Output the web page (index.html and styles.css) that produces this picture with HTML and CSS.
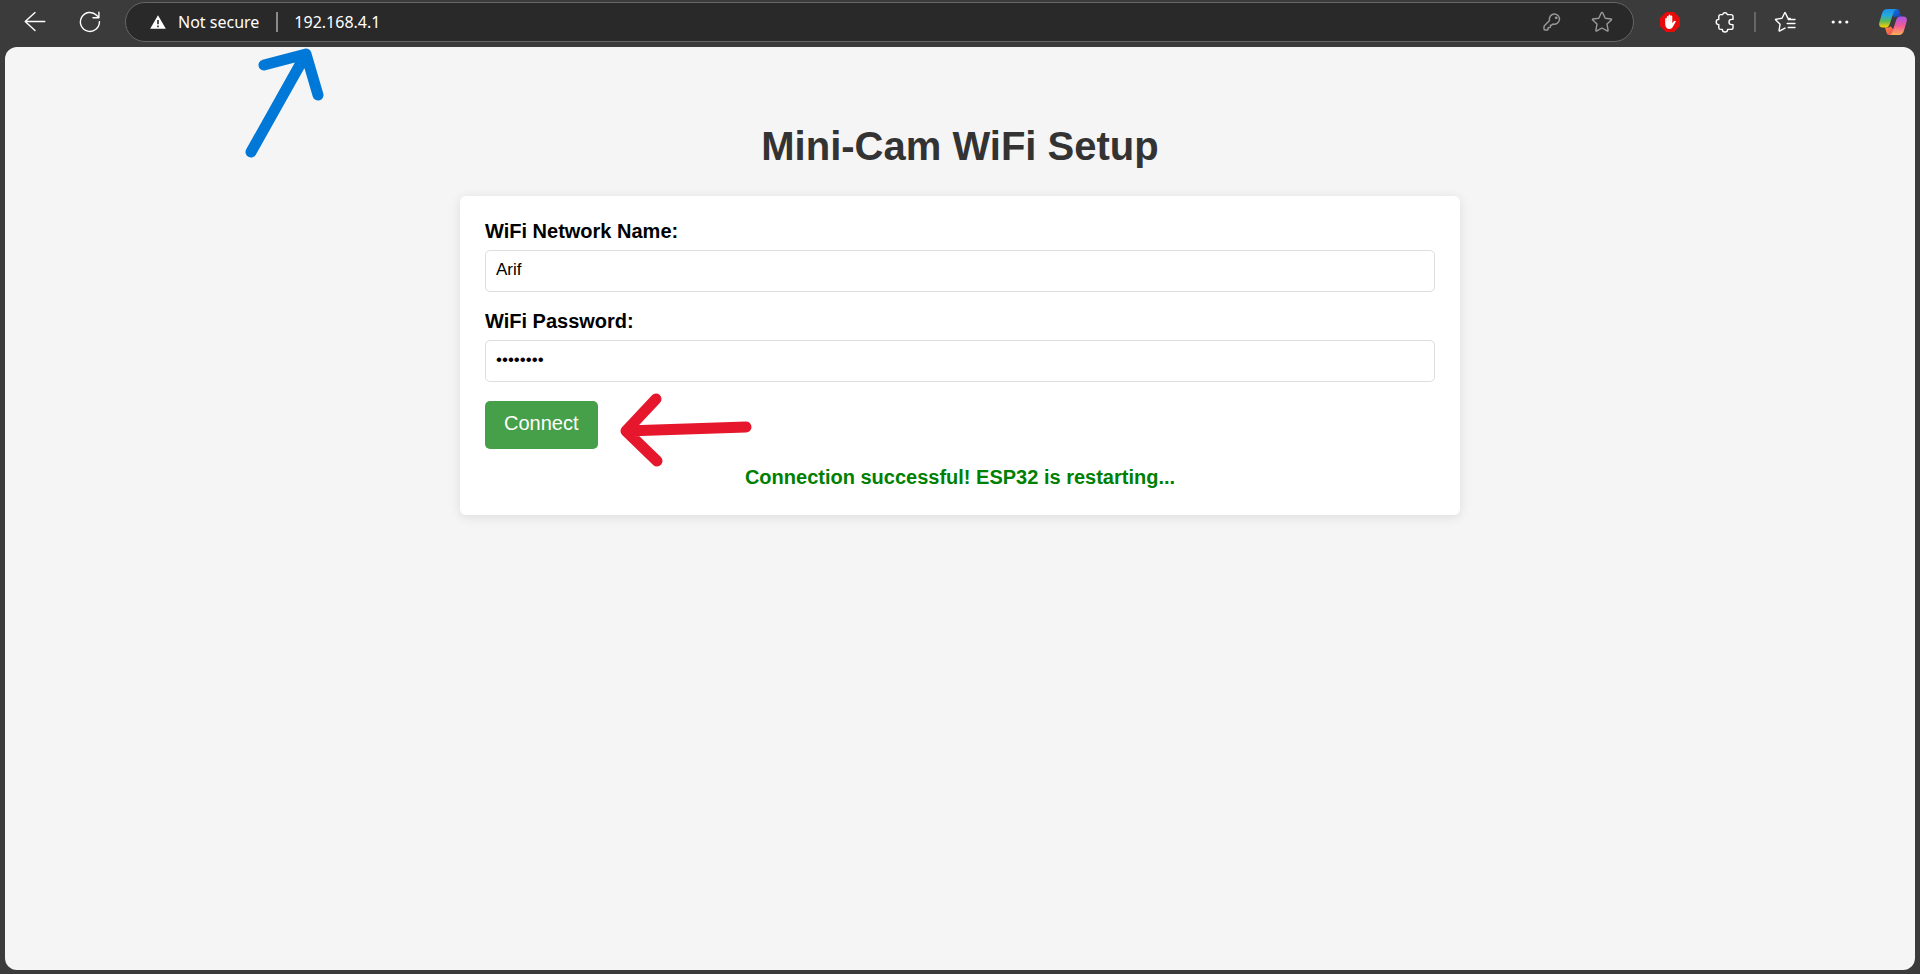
FILE: index.html
```html
<!DOCTYPE html>
<html lang="en">
<head>
<meta charset="utf-8">
<title>Mini-Cam WiFi Setup</title>
<link rel="stylesheet" href="styles.css">
</head>
<body>
<header class="toolbar">
  <nav class="group group-nav" aria-label="Navigation">
    <button class="tool" type="button" aria-label="Back">
      <svg width="22" height="22" viewBox="0 0 22 22" class="line"><path d="M20.8 10.5H1.2M11 1.6L1.2 10.5L11 19.6"/></svg>
    </button>
    <button class="tool" type="button" aria-label="Refresh">
      <svg width="22" height="22" viewBox="0 0 22 22" class="line"><path d="M20.4 10.6A9.5 9.5 0 1 1 17.6 4.2L19.6 6.4M19.9 1.3V6.8H14"/></svg>
    </button>
  </nav>

  <div class="address">
    <button class="security" type="button">
      <svg width="16" height="14" viewBox="0 0 16 14"><path d="M8 0.3L15.8 13.8H0.2Z" fill="#fff"/><path d="M8 5v4.2M8 10.6v1.7" stroke="#292929" stroke-width="1.6"/></svg>
      <span>Not secure</span>
    </button>
    <span class="rule"></span>
    <input class="url" type="text" value="192.168.4.1" aria-label="Address">
    <div class="address-actions">
      <button class="mini" type="button" aria-label="Saved passwords">
        <svg width="18" height="18" viewBox="0 0 18 18" class="line dim"><path d="M11.7 1A5.2 5.2 0 0 0 6.5 7.6L1.4 12.7Q1 13.1 1 13.7V16Q1 17 2 17H4.2Q5 17 5 16.2V14.6H6.6Q7.4 14.6 7.4 13.8V12.2H8.6L10 11A5.1 5.1 0 1 0 11.7 1Z"/><circle cx="13.2" cy="4.8" r="0.7"/></svg>
      </button>
      <button class="mini" type="button" aria-label="Add to favorites">
        <svg width="22" height="22" viewBox="0 0 22 22" class="line dim"><path d="M11 1.4Q11.5 1.4 11.8 2L14.2 7.2L20 8Q21 8.2 20.3 9L16 13.1L17.1 19.2Q17.2 20.4 16.2 19.9L11 17L5.8 19.9Q4.8 20.4 4.9 19.2L6 13.1L1.7 9Q1 8.2 2 8L7.8 7.2L10.2 2Q10.5 1.4 11 1.4Z"/></svg>
      </button>
    </div>
  </div>

  <div class="group group-extensions">
    <button class="tool" type="button" aria-label="Ad blocker">
      <svg width="20" height="20" viewBox="0 0 20 20"><path d="M5.9 0H14.1L20 5.9V14.1L14.1 20H5.9L0 14.1V5.9Z" fill="#e60a0a"/><path d="M5.2 7Q5.2 5.9 6 5.9T6.8 7V5Q6.8 3.9 7.7 3.9T8.6 5V3.5Q8.6 2.5 9.5 2.5T10.4 3.5V4.6Q10.5 3.6 11.4 3.6T12.3 4.6V11.2L13.8 9.3Q14.7 8.4 15.6 8.9Q16 9.2 15.7 9.7L12.8 15Q11.8 17 9.3 17Q6.7 17 5.8 14.8Q5.2 13.4 5.2 11Z" fill="#fff"/><path d="M6.8 7V10M8.6 5V9.5M10.4 4.6V9.5" stroke="#f3aaaa" stroke-width=".35"/></svg>
    </button>
    <button class="tool" type="button" aria-label="Extensions">
      <svg width="20" height="22" viewBox="0 0 20 22" class="line"><path d="M7.6 3.6A2.5 2.5 0 0 1 12.4 3.6H16Q18 3.6 18 5.6V8.4H16.6A2.6 2.6 0 0 0 16.6 13.6H18V16.4Q18 18.4 16 18.4H12.6A2.5 2.5 0 0 1 7.4 18.4H5.4Q3.8 18.4 3.8 16.8V13.6A2.6 2.6 0 0 1 3.8 8.4V5.4Q3.8 3.6 5.6 3.6Z"/></svg>
    </button>
  </div>
  <span class="rule rule-dark"></span>
  <div class="group group-menu">
    <button class="tool" type="button" aria-label="Favorites">
      <svg width="22" height="22" viewBox="0 0 22 22" class="line"><path d="M16.2 7.5L13.8 7.1L11.4 2Q11 1 10.6 2L8 7.3L2 8.2Q1.1 8.4 1.8 9.1L6.1 13.2L5.1 19.2Q5 20.3 5.9 19.9L11 17.1M14.2 8.5H21M13.2 12.5H21M14.2 16.5H21"/></svg>
    </button>
    <button class="tool" type="button" aria-label="Settings and more">
      <svg width="20" height="6" viewBox="0 0 20 6" fill="#fff"><circle cx="3.2" cy="3" r="1.6"/><circle cx="10" cy="3" r="1.6"/><circle cx="16.8" cy="3" r="1.6"/></svg>
    </button>
  </div>
  <button class="tool copilot" type="button" aria-label="Copilot">
    <svg width="28" height="26" viewBox="0 0 28 26">
      <defs>
        <linearGradient id="cool" x1="0" y1="0" x2="0" y2="1"><stop offset="0" stop-color="#1d8fe8"/><stop offset=".35" stop-color="#25a9df"/><stop offset=".65" stop-color="#5cb85a"/><stop offset="1" stop-color="#ffd000"/></linearGradient>
        <linearGradient id="warm" x1="0" y1="0" x2="0" y2="1"><stop offset="0" stop-color="#a855ea"/><stop offset=".5" stop-color="#ef5a98"/><stop offset="1" stop-color="#ffad55"/></linearGradient>
        <linearGradient id="fold" x1="0" y1="0" x2="1" y2="1"><stop offset="0" stop-color="#1672dc"/><stop offset="1" stop-color="#173db8"/></linearGradient>
        <linearGradient id="ember" x1="0" y1="0" x2="1" y2="1"><stop offset="0" stop-color="#ff913e"/><stop offset="1" stop-color="#ee4a55"/></linearGradient>
      </defs>
      <path d="M14 0H17.6Q19.7 0 20.4 2.2L21.6 6.2Q22 7.6 23.5 7.6H18.4Q16.5 7.6 15.5 8.6L13.6 6Z" fill="url(#fold)"/>
      <path d="M4.5 18.4H8.4Q10.5 18.4 11.6 17.2L14 20L13.8 26H10.2Q8.2 26 7.5 23.8L6.4 19.8Q6 18.4 4.5 18.4Z" fill="url(#ember)"/>
      <path d="M8.2 0H17.6Q15.6.4 14.8 2.8L10.6 15.6Q9.6 18.5 7.2 18.5H3.8Q-.8 18.5.4 13.3L3.1 4.3Q4.4 0 8.2 0Z" fill="url(#cool)"/>
      <path d="M19.8 26H10.4Q12.4 25.600 13.2 23.2L17.4 10.4Q18.4 7.5 20.8 7.5H24.2Q28.8 7.5 27.6 12.7L24.9 21.7Q23.6 26 19.8 26Z" fill="url(#warm)"/>
    </svg>
  </button>
</header>

<main class="page">
  <svg class="mark mark-address" width="80" height="112" viewBox="0 0 80 112" aria-hidden="true"><path d="M7 105L62 7M20 18L62 7L74 48"/></svg>
  <h1 class="title">Mini-Cam WiFi Setup</h1>
  <form class="card">
    <div class="field">
      <label for="ssid">WiFi Network Name:</label>
      <input id="ssid" type="text" value="Arif">
    </div>
    <div class="field">
      <label for="password">WiFi Password:</label>
      <input id="password" type="password" value="password">
    </div>
    <div class="submit">
      <button class="connect" type="button">Connect</button>
      <svg class="mark mark-connect" width="134" height="76" viewBox="0 0 134 76" aria-hidden="true"><path d="M127 34L7 38M37 6L7 38L38 68"/></svg>
    </div>
    <p class="status" role="status">Connection successful! ESP32 is restarting...</p>
  </form>
</main>
</body>
</html>
```

FILE: styles.css
```css
* {
  box-sizing: border-box;
}

body {
  display: flex;
  flex-direction: column;
  min-height: 100vh;
  margin: 0;
  background: #3b3b3b;
  font-family: "Liberation Sans", Arial, sans-serif;
}

button {
  padding: 0;
  border: 0;
  background: none;
  font: inherit;
}

/* Browser toolbar */
.toolbar {
  display: flex;
  align-items: center;
  padding: 2px 7px 5px 15px;
}

.group {
  display: flex;
  align-items: center;
  gap: 15px;
}

.group-nav {
  margin-right: 15px;
}

.group-extensions {
  margin: 0 9px 0 16px;
}

.group-menu {
  margin: 0 13px 0 9px;
}

.tool {
  display: grid;
  place-items: center;
  width: 40px;
  height: 40px;
}

.line {
  fill: none;
  stroke: #fff;
  stroke-width: 1.4;
  stroke-linecap: round;
  stroke-linejoin: round;
}

.dim {
  stroke: #999;
}

.address {
  display: flex;
  flex: 1;
  align-items: center;
  height: 40px;
  padding: 0 20px 0 24px;
  border: 1px solid #666;
  border-radius: 20px;
  background: #292929;
  color: #fff;
  font-family: "Noto Sans", "Open Sans", sans-serif;
  font-size: 16px;
}

.security {
  display: flex;
  align-items: center;
  gap: 12px;
  margin-right: 17px;
  color: #fff;
}

.rule {
  width: 2px;
  height: 20px;
  background: #8a8a8a;
}

.rule-dark {
  background: #666;
}

.url {
  flex: 1;
  min-width: 0;
  padding: 0;
  margin-left: 16px;
  border: 0;
  outline: 0;
  background: none;
  color: #fff;
  font: inherit;
}

.address-actions {
  display: flex;
  align-items: center;
  gap: 30px;
}

.mini {
  display: grid;
  place-items: center;
}

/* Setup page */
.page {
  position: relative;
  flex: 1;
  margin: 0 5px 4px;
  padding: 76px 20px 20px;
  border-radius: 12px;
  background: #f5f5f5;
}

.title {
  margin: 0 0 27px;
  color: #333;
  font-size: 40px;
  line-height: 46px;
  text-align: center;
}

.card {
  max-width: 1000px;
  margin: 0 auto;
  padding: 24px 25px 26px;
  border-radius: 6px;
  background: #fff;
  box-shadow: 0 2px 12px rgba(0, 0, 0, 0.1);
  font-size: 20px;
}

.field {
  margin-bottom: 18px;
}

.field label {
  display: block;
  margin-bottom: 7px;
  font-weight: bold;
  line-height: 23px;
}

.field input {
  display: block;
  width: 100%;
  height: 42px;
  padding: 0 10px 2px;
  border: 1px solid #ddd;
  border-radius: 5px;
  outline: 0;
  background: #fff;
  color: #000;
  font-family: inherit;
  font-size: 17px;
}

.submit {
  position: relative;
  display: flex;
  margin-top: 19px;
}

.connect {
  padding: 11px 19px 14px;
  border-radius: 5px;
  background: #45a049;
  color: #fff;
  line-height: 23px;
}

.status {
  margin: 17px 0 0;
  color: green;
  font-weight: bold;
  line-height: 23px;
  text-align: center;
}

/* Hand-drawn arrows laid over the page */
.mark {
  position: absolute;
  fill: none;
  stroke-width: 11;
  stroke-linecap: round;
  stroke-linejoin: round;
}

.mark-address {
  top: 0;
  left: 239px;
  stroke: #0078d7;
}

.mark-connect {
  top: -8px;
  left: 134px;
  stroke: #e6172d;
}
```
